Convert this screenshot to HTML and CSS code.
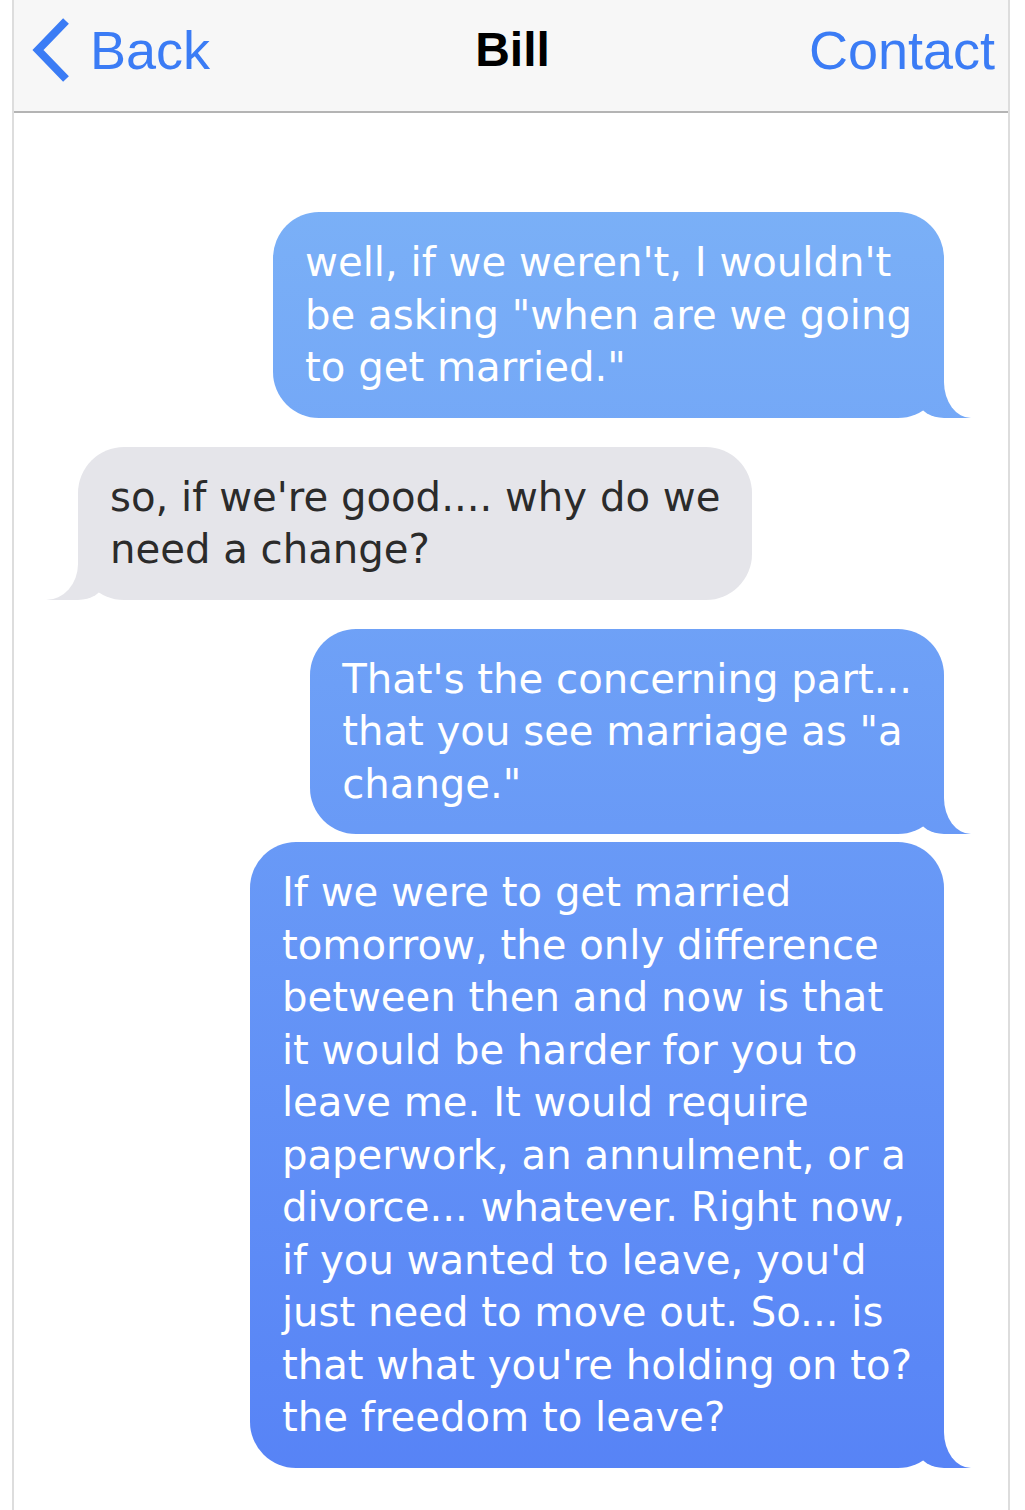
FILE: index.html
```html
<!doctype html>
<html lang="en">
  <head>
    <meta charset="UTF-8" />
    <meta name="viewport" content="width=device-width, initial-scale=1.0" />
    <title>Bill</title>
    <link rel="stylesheet" href="styles.css">
  </head>
  <body>
    <div class="phone">
      <!-- Navigation bar -->
      <header class="nav">
        <a class="nav-back" href="#">
          <svg class="chevron" width="40" height="64" viewBox="0 0 40 64" aria-hidden="true">
            <path d="M36 3 L8 32 L36 61" />
          </svg>
          Back
        </a>
        <div class="nav-title">Bill</div>
        <a class="nav-contact" href="#">Contact</a>
      </header>

      <!-- Conversation -->
      <main class="thread">
        <div class="msg sent">well, if we weren't, I wouldn't<br>be asking "when are we going<br>to get married."</div>
        <div class="msg received">so, if we're good.... why do we<br>need a change?</div>
        <div class="msg sent">That's the concerning part...<br>that you see marriage as "a<br>change."</div>
        <div class="msg sent follow">If we were to get married<br>tomorrow, the only difference<br>between then and now is that<br>it would be harder for you to<br>leave me. It would require<br>paperwork, an annulment, or a<br>divorce... whatever. Right now,<br>if you wanted to leave, you'd<br>just need to move out. So... is<br>that what you're holding on to?<br>the freedom to leave?</div>
      </main>
    </div>
  </body>
</html>
```

FILE: styles.css
```css
/* Colours used across the conversation view */
:root {
  --nav-bg: #f7f7f7;
  --nav-line: #b4b4b4;
  --frame: #dddddd;
  --link-blue: #3b7cf5;
  --sent-top: #80b7f7;
  --sent-bottom: #5682f6;
  --received: #e5e5ea;
  --received-text: #2b2b2b;
}

* {
  box-sizing: border-box;
}

body {
  margin: 0;
  background: #ffffff;
  font-family: "DejaVu Sans", "Liberation Sans", sans-serif;
}

/* Device frame - thin grey rails down both sides */
.phone {
  width: 998px;
  margin-left: 12px;
  min-height: 100vh;
  border-left: 2px solid var(--frame);
  border-right: 2px solid var(--frame);
}

/* Navigation Bar */
.nav {
  height: 113px;
  padding: 0 13px 12px 16px;
  display: grid;
  grid-template-columns: 1fr auto 1fr;
  align-items: center;
  background: var(--nav-bg);
  border-bottom: 2px solid var(--nav-line);
  font-family: "Liberation Sans", Arial, sans-serif;
}

.nav a {
  color: var(--link-blue);
  text-decoration: none;
  font-size: 54px;
}

.nav-back {
  display: flex;
  align-items: center;
  gap: 20px;
  justify-self: start;
}

.chevron {
  fill: none;
  stroke: var(--link-blue);
  stroke-width: 8;
}

.nav-title {
  font-size: 48px;
  font-weight: 700;
  color: #000000;
}

.nav-contact {
  justify-self: end;
}

/* Message Thread */
.thread {
  display: flex;
  flex-direction: column;
  padding: 99px 64px 40px;
}

.msg {
  position: relative;
  width: fit-content;
  padding: 24px 32px;
  border-radius: 46px;
  font-size: 40.2px;
  line-height: 52.5px;
  margin-top: 29px;
}

.msg:first-child {
  margin-top: 0;
}

.msg.follow {
  margin-top: 8px;
}

/* Outgoing bubbles share one gradient pinned to the viewport */
.sent {
  align-self: flex-end;
  color: #ffffff;
  background: linear-gradient(to bottom, var(--sent-top), var(--sent-bottom)) fixed;
}

.received {
  align-self: flex-start;
  color: var(--received-text);
  background: var(--received);
}

/* Bubble tails: a coloured block, with a white block carving the curve */
.msg::before,
.msg::after {
  content: "";
  position: absolute;
  bottom: 0;
}

.sent::before {
  right: -27px;
  width: 51px;
  height: 46px;
  background: linear-gradient(to bottom, var(--sent-top), var(--sent-bottom)) fixed;
  border-bottom-left-radius: 24px 15px;
}

.sent::after {
  left: 100%;
  width: 40px;
  height: 48px;
  background: #ffffff;
  border-bottom-left-radius: 27px 36px;
}

.received::before {
  left: -32px;
  width: 56px;
  height: 46px;
  background: var(--received);
  border-bottom-right-radius: 24px 15px;
}

.received::after {
  right: 100%;
  width: 44px;
  height: 48px;
  background: #ffffff;
  border-bottom-right-radius: 32px 36px;
}
```
